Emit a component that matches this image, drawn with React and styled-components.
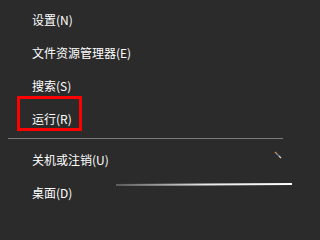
import React from 'react'
import styled, { createGlobalStyle } from 'styled-components'

const GlobalStyle = createGlobalStyle`
	html, body {
		margin: 0;
		padding: 0;
		background-color: #2b2b2b;
	}
	#root {
		width: 292px;
		height: 217px;
		overflow: hidden;
	}
`

const Menu = styled.div`
	position: relative;
	width: 292px;
	height: 217px;
	padding-top: 3px;
	box-sizing: border-box;
	display: flex;
	flex-direction: column;
	background-color: #2b2b2b;
	font-family: 'Noto Sans CJK SC', 'Noto Sans', sans-serif;
	font-size: 12px;
	color: #ffffff;
`

const MenuItem = styled.div`
	position: relative;
	height: 33px;
	line-height: 33px;
	padding-left: 32px;
	white-space: nowrap;
`

const Highlight = styled.div`
	position: absolute;
	left: 17px;
	top: -6px;
	width: 65px;
	height: 35px;
	box-sizing: border-box;
	border: 3px solid #ff0000;
	pointer-events: none;
`

const Separator = styled.div`
	height: 1px;
	margin: 3px 9px 4px 8px;
	background-color: #7a7a7a;
`

const Streak = styled.div`
	position: absolute;
	left: 116px;
	top: 184px;
	width: 180px;
	height: 2px;
	background: linear-gradient(
		to right,
		#5a5a5a 0%,
		#a0a0a0 25%,
		#e8e8e8 50%,
		#ffffff 100%
	);
	transform: rotate(-0.3deg);
	transform-origin: left center;
`

const Glint = styled.svg`
	position: absolute;
	left: 274px;
	top: 151px;
`

const items = [
	{ label: '设置(N)' },
	{ label: '文件资源管理器(E)' },
	{ label: '搜索(S)' },
	{ label: '运行(R)', marked: true },
	{ separator: true },
	{ label: '关机或注销(U)' },
	{ label: '桌面(D)' },
]

const App = () => {
	return (
		<>
			<GlobalStyle />
			<Menu>
				{items.map((item, index) =>
					item.separator ? (
						<Separator key={index} />
					) : (
						<MenuItem key={index}>
							{item.marked && <Highlight />}
							{item.label}
						</MenuItem>
					)
				)}
				<Streak />
				<Glint width="8" height="8" viewBox="0 0 8 8">
					<line x1="1" y1="1" x2="3" y2="3" stroke="#e08a3a" strokeWidth="1.2" />
					<line x1="3" y1="3" x2="5" y2="5" stroke="#4a8ad8" strokeWidth="1.2" />
					<line x1="5" y1="5" x2="7" y2="7" stroke="#f0d0a0" strokeWidth="1.2" />
				</Glint>
			</Menu>
		</>
	)
}

export default App
